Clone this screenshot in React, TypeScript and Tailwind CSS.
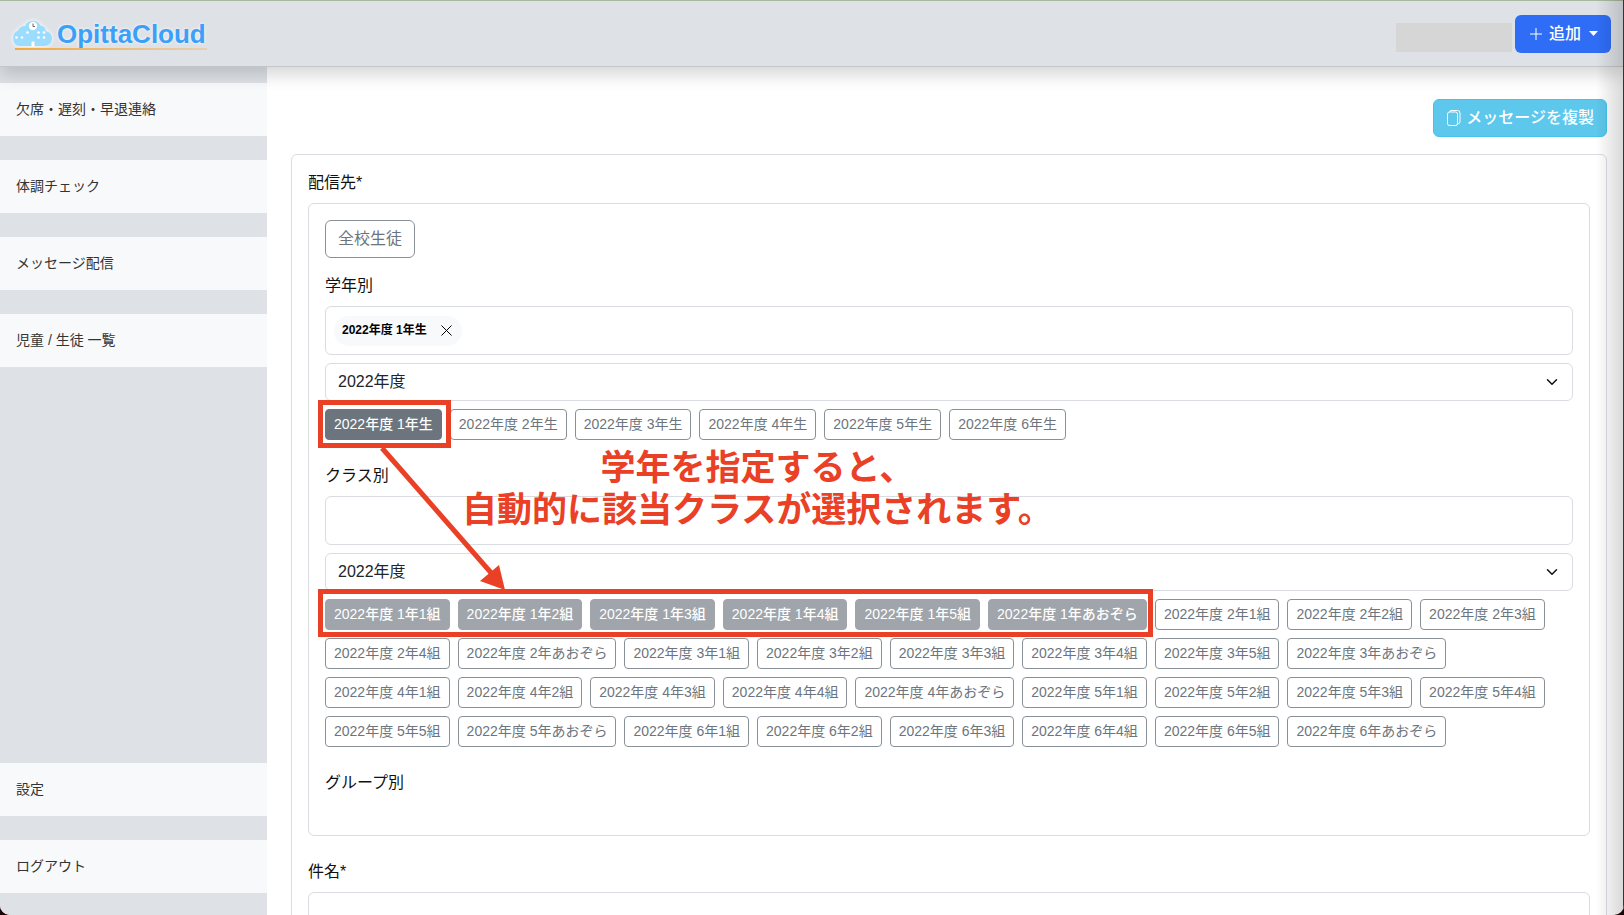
import { useState } from "react";

const NAV_ITEMS = ["欠席・遅刻・早退連絡", "体調チェック", "メッセージ配信", "児童 / 生徒 一覧"];
const FOOTER_ITEMS = ["設定", "ログアウト"];

const GRADES = [1, 2, 3, 4, 5, 6].map((g) => `2022年度 ${g}年生`);

const CLASS_COUNTS = [5, 4, 5, 4, 5, 5];
const CLASSES = CLASS_COUNTS.flatMap((count, i) => [
  ...Array.from({ length: count }, (_, n) => ({ grade: i + 1, label: `2022年度 ${i + 1}年${n + 1}組` })),
  { grade: i + 1, label: `2022年度 ${i + 1}年あおぞら` },
]);

function Logo() {
  return (
    <a href="#" aria-label="OpittaCloud" className="relative flex items-center gap-[5px]">
      <svg width="40" height="32" viewBox="0 0 40 32" className="drop-shadow-[0_0_2px_#ffffff]">
        <path
          d="M7 28a7 8 0 0 1-1-15.500Q8 8 13 8a8.500 8.500 0 0 1 15.500-.5Q33 8 34 13A7.600 7.600 0 0 1 33 28Z"
          fill="#9bdcff"
        />
        <circle cx="21" cy="8" r="4.200" fill="#fff" />
        <path d="M21 5.500V8.500h2" stroke="#666" fill="none" />
        <g fill="#fff">
          <circle cx="15.500" cy="14.500" r="1.300" />
          <circle cx="26.500" cy="14.500" r="1.300" />
          <circle cx="32" cy="14.500" r="1.300" />
          <circle cx="4.500" cy="19.500" r="1.300" />
          <circle cx="10" cy="19.500" r="1.300" />
          <circle cx="26.500" cy="19.500" r="1.300" />
          <circle cx="32" cy="19.500" r="1.300" />
          <rect x="19.500" y="23.500" width="3" height="5" />
        </g>
      </svg>
      <span className="text-[26px] leading-8 font-bold text-[#3c9ff8] [text-shadow:0_0_3px_#ffffff]">
        OpittaCloud
      </span>
      <span className="absolute bottom-0 left-[3px] h-0.5 w-48 bg-gradient-to-r from-[#f5a83c] to-[#f5a83c]/30" />
    </a>
  );
}

function NavItem({ label }: { label: string }) {
  return (
    <a href="#" className="flex h-[53px] shrink-0 items-center bg-[#f8f9fb] px-4 pb-0.5 text-sm text-[#333]">
      {label}
    </a>
  );
}

type ChipProps = {
  label: string;
  variant: "outline" | "active" | "disabled";
  onClick?: () => void;
};

function Chip({ label, variant, onClick }: ChipProps) {
  const styles = {
    outline: "border-[#8a9097] bg-white text-[#6c757d]",
    active: "border-[#6c757d] bg-[#6c757d] text-white font-medium",
    disabled: "border-[#9fa5aa] bg-[#9fa5aa] text-white font-medium",
  };
  return (
    <button
      type="button"
      disabled={variant === "disabled"}
      onClick={onClick}
      className={`h-[31px] whitespace-nowrap rounded border px-2 pb-0.5 text-sm ${styles[variant]}`}
    >
      {label}
    </button>
  );
}

function YearSelect({ label }: { label: string }) {
  return (
    <div className="relative mb-2">
      <select
        aria-label={label}
        className="h-[38px] w-full appearance-none rounded-md border border-[#d9dce0] bg-white px-3 text-base text-[#212529]"
      >
        <option>2022年度</option>
      </select>
      <svg
        width="12"
        height="12"
        viewBox="0 0 16 16"
        fill="none"
        stroke="#111"
        strokeWidth="2"
        strokeLinecap="round"
        strokeLinejoin="round"
        className="pointer-events-none absolute right-[15px] top-[13px]"
      >
        <path d="m2 5 6 6 6-6" />
      </svg>
    </div>
  );
}

export default function App() {
  const [grade, setGrade] = useState(1);

  return (
    <div className="h-screen bg-[#1a0508] text-[#111] [font-family:'Liberation_Sans','Noto_Sans_CJK_JP',sans-serif]">
      <div className="relative flex h-full flex-col overflow-hidden rounded-b-[10px] bg-white">
        <header className="z-10 flex h-[67px] shrink-0 items-center justify-between border-t border-b border-t-[#a9ba9c] border-b-[#c4c7ca] bg-[#dee2e6] pl-3 pr-[13px] shadow-[0_8px_16px_rgba(0,0,0,0.16)]">
          <Logo />
          <div className="flex items-center gap-[3px]">
            <div className="mt-2 h-[29px] w-[116px] bg-[#d6d6d6]" />
            <button
              type="button"
              className="flex h-[38px] items-center rounded-md bg-[#2f6df6] pl-[14px] pr-[13px] text-base font-medium text-white"
            >
              <svg width="14" height="14" viewBox="0 0 14 14" stroke="currentColor" className="mr-[6px]">
                <path d="M1 7h12M7 1v12" />
              </svg>
              追加
              <svg width="9" height="5" viewBox="0 0 9 5" fill="currentColor" className="ml-2">
                <path d="M0 0h9L4.500 5z" />
              </svg>
            </button>
          </div>
        </header>

        <div className="flex min-h-0 flex-1">
          <nav className="flex w-[267px] shrink-0 flex-col gap-6 bg-[#dee2e6] pt-4 pb-[22px]">
            {NAV_ITEMS.map((item) => (
              <NavItem key={item} label={item} />
            ))}
            <div className="flex-1" />
            {FOOTER_ITEMS.map((item) => (
              <NavItem key={item} label={item} />
            ))}
          </nav>

          <main className="min-w-0 flex-1 overflow-hidden pl-6 pr-[17px] pt-8">
            <div className="mb-[17px] flex justify-end">
              <button
                type="button"
                className="flex h-[38px] items-center gap-1 rounded-md border border-[#45c3ec] bg-[#5dc7ec] px-3 text-base font-medium text-white"
              >
                <svg width="16" height="16" viewBox="0 0 16 16" fill="none" stroke="currentColor">
                  <rect x="1.500" y="2" width="10" height="13.500" rx="2" />
                  <path d="M4 2V1.500Q4 .5 5 .5h6.500a2.500 2.500 0 0 1 2.500 2.500v9q0 1.500-2.500 2" />
                </svg>
                メッセージを複製
              </button>
            </div>

            <form className="rounded-md border border-[#d9dce0] p-4 pb-40">
              <h2 className="mb-2 text-base leading-6">配信先*</h2>
              <section className="relative mb-6 rounded-md border border-[#d9dce0] p-4 pb-10">
                <button
                  type="button"
                  className="mb-4 h-[38px] rounded-md border border-[#8a9097] px-3 text-base text-[#6c757d]"
                >
                  全校生徒
                </button>

                <h3 className="mb-2 text-base leading-6">学年別</h3>
                <div className="mb-2 flex h-[49px] items-center rounded-md border border-[#d9dce0] px-2">
                  <span className="flex h-[30px] items-center gap-[14px] rounded-full bg-[#f8f9fa] pl-2 pr-[10px] text-xs font-bold text-black">
                    <span className="pb-0.5">2022年度 {grade}年生</span>
                    <button type="button" aria-label="削除">
                      <svg width="11" height="11" viewBox="0 0 11 11" stroke="currentColor">
                        <path d="m.5.5 10 10M10.500.5l-10 10" />
                      </svg>
                    </button>
                  </span>
                </div>
                <YearSelect label="学年別の年度" />
                <div className="mb-6 flex flex-wrap gap-2">
                  {GRADES.map((label, i) => (
                    <Chip
                      key={label}
                      label={label}
                      variant={grade === i + 1 ? "active" : "outline"}
                      onClick={() => setGrade(i + 1)}
                    />
                  ))}
                </div>

                <h3 className="mb-2 text-base leading-6">クラス別</h3>
                <div className="mb-2 h-[49px] rounded-md border border-[#d9dce0]" />
                <YearSelect label="クラス別の年度" />
                <div className="mb-6 flex flex-wrap gap-2">
                  {CLASSES.map((c) => (
                    <Chip key={c.label} label={c.label} variant={c.grade === grade ? "disabled" : "outline"} />
                  ))}
                </div>

                <h3 className="text-base leading-6">グループ別</h3>

                {/* callouts drawn over the form */}
                <div className="pointer-events-none absolute left-[9px] top-[196px] h-12 w-[133px] border-[5px] border-[#ea4025]" />
                <div className="pointer-events-none absolute left-[9px] top-[385px] h-12 w-[835px] border-[5px] border-[#ea4025]" />
                <svg
                  width="140"
                  height="150"
                  viewBox="0 0 140 150"
                  className="pointer-events-none absolute left-[69px] top-[240px]"
                >
                  <path d="M4 4 115 131" stroke="#ea4025" strokeWidth="5" />
                  <path d="M127 146 102 137 121 121z" fill="#ea4025" />
                </svg>
                <p className="pointer-events-none absolute left-[153px] top-[243px] whitespace-nowrap text-center text-[35px] leading-[42px] font-bold text-[#ea4025]">
                  学年を指定すると、
                  <br />
                  自動的に該当クラスが選択されます。
                </p>
              </section>

              <label htmlFor="subject" className="mb-2 block text-base leading-6">
                件名*
              </label>
              <input id="subject" type="text" className="h-[38px] w-full rounded-md border border-[#d9dce0] px-3" />
            </form>
          </main>
        </div>

        {/* window edge */}
        <div className="pointer-events-none absolute inset-y-0 right-0 z-20 w-7 border-r border-[#333] bg-gradient-to-l from-black/15 to-transparent" />
      </div>
    </div>
  );
}
